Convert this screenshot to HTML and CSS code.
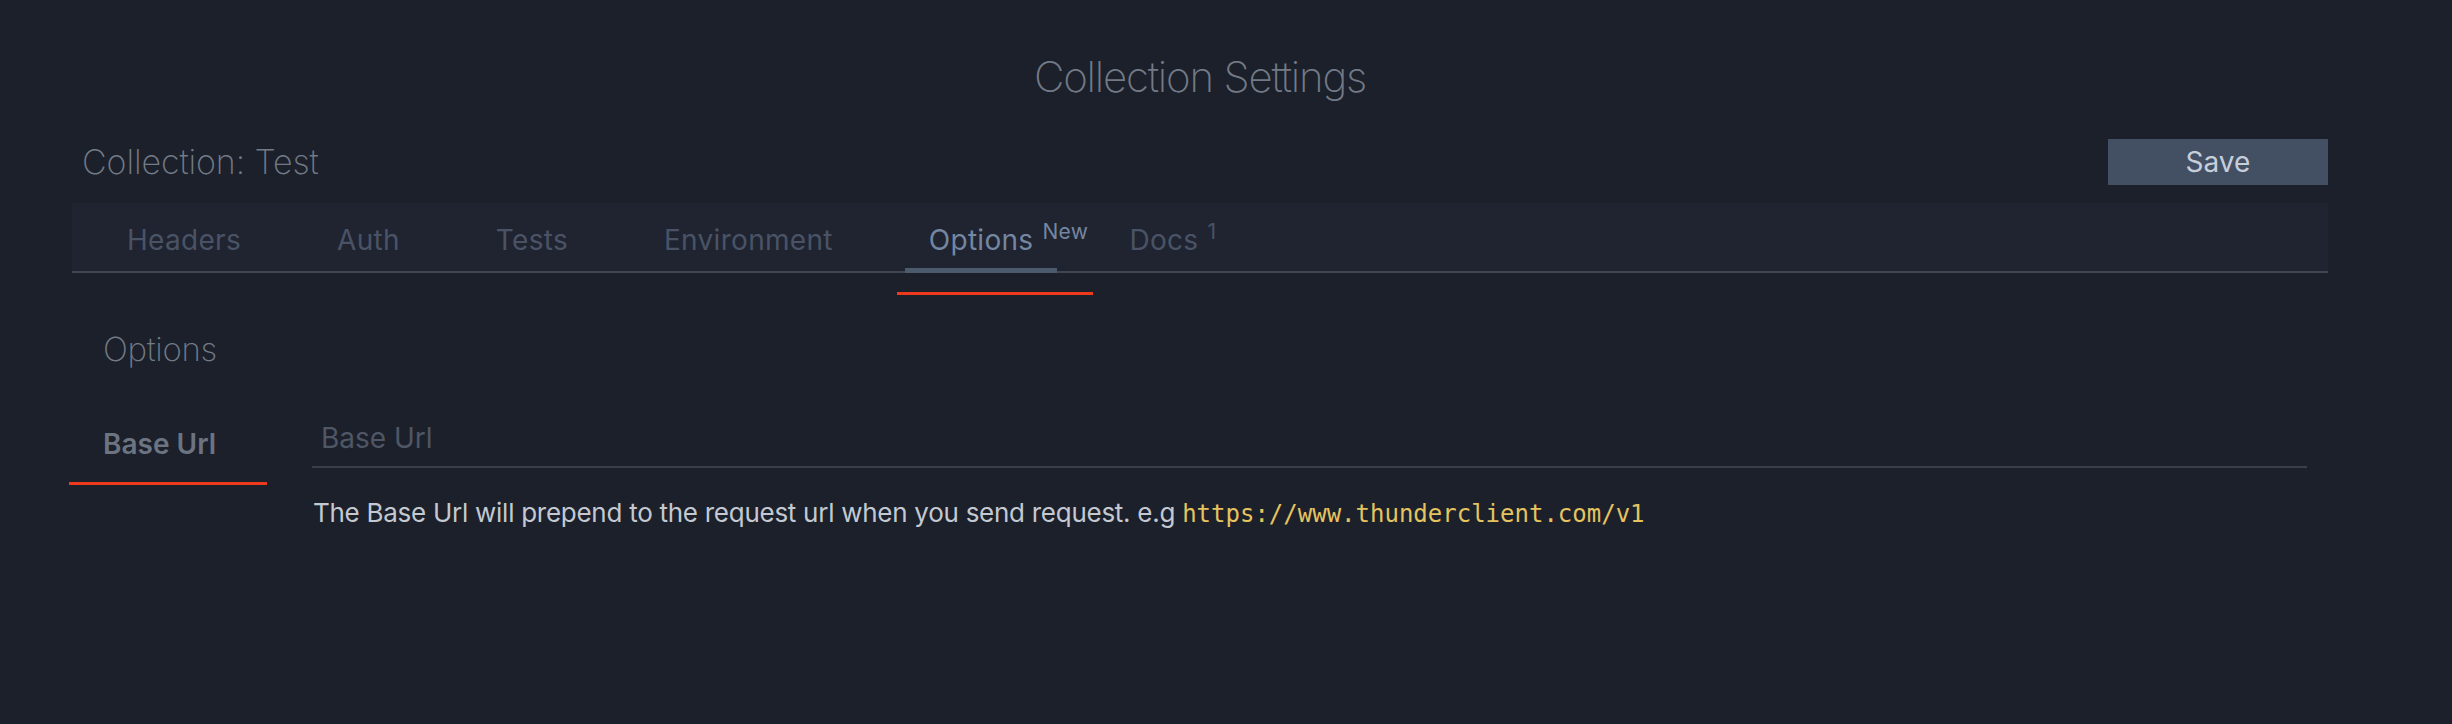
FILE: index.html
```html
<!DOCTYPE html>
<html lang="en">
<head>
  <meta charset="UTF-8">
  <meta name="viewport" content="width=device-width, initial-scale=1.0">
  <title>Collection Settings</title>
  <link rel="stylesheet" href="styles.css">
</head>
<body>
  <div class="page">
    <h1 class="page-title">Collection Settings</h1>

    <div class="header-row">
      <h2 class="collection-name">Collection: Test</h2>
      <button class="save-btn">Save</button>
    </div>

    <div class="tab-bar">
      <div class="tab">Headers</div>
      <div class="tab">Auth</div>
      <div class="tab">Tests</div>
      <div class="tab">Environment</div>
      <div class="tab active"><span class="tab-label">Options<sup class="tab-sup">New</sup></span></div>
      <div class="tab"><span class="tab-label">Docs<sup class="tab-sup">1</sup></span></div>
    </div>

    <h3 class="section-title">Options</h3>

    <div class="option-row">
      <div class="option-label">Base Url</div>
      <div class="option-field">
        <input class="text-input" type="text" placeholder="Base Url">
        <p class="option-help">The Base Url will prepend to the request url when you send request. e.g <code>https://www.thunderclient.com/v1</code></p>
      </div>
    </div>
  </div>
</body>
</html>
```

FILE: styles.css
```css
body {
  margin: 0;
  background-color: #1b202b;
  font-family: Inter, "Noto Sans", sans-serif;
  color: #6f7682;
}

.page {
  margin-left: 72px;
  width: 2256px;
  padding-top: 50px;
}

.page-title {
  margin: 0;
  text-align: center;
  font-size: 42px;
  line-height: 53px;
  font-weight: 200;
  letter-spacing: -1.2px;
  color: #737a86;
}

.header-row {
  display: flex;
  align-items: center;
  justify-content: space-between;
  margin-top: 36px;
  height: 46px;
}

.collection-name {
  margin: 0 0 0 10px;
  font-size: 34px;
  line-height: 46px;
  font-weight: 200;
  letter-spacing: -0.1px;
  color: #737a86;
}

.save-btn {
  width: 220px;
  height: 46px;
  border: none;
  background-color: #435064;
  color: #c6ced9;
  font-family: Inter, "Noto Sans", sans-serif;
  font-size: 28px;
  cursor: pointer;
}

.tab-bar {
  display: flex;
  margin-top: 18px;
  height: 68px;
  padding-left: 7px;
  background-color: #1f2430;
  border-bottom: 2px solid #41454f;
}

.tab {
  position: relative;
  margin: 0 24px;
  padding: 6px 24px 0;
  line-height: 62px;
  font-size: 28px;
  letter-spacing: 0.3px;
  color: #4a5366;
  white-space: nowrap;
}

.tab.active {
  color: #7486a0;
}

.tab.active::after {
  content: "";
  position: absolute;
  left: 0;
  right: 0;
  bottom: -2px;
  height: 5px;
  background-color: #4c5a6e;
}

.tab.active::before {
  content: "";
  position: absolute;
  left: -8px;
  width: 196px;
  top: 89px;
  height: 3px;
  background-color: #ee3a1c;
}

.tab-label {
  position: relative;
}

.tab-sup {
  position: absolute;
  left: 100%;
  top: -4px;
  margin-left: 9px;
  font-size: 21px;
  line-height: normal;
}

.section-title {
  margin: 56px 0 0 31px;
  font-size: 33px;
  line-height: 41px;
  font-weight: 200;
  letter-spacing: -0.3px;
  color: #737a86;
}

.option-row {
  display: grid;
  grid-template-columns: 198px 1fr;
  column-gap: 45px;
  align-items: start;
  margin: 51px 21px 0 -3px;
}

.option-label {
  margin-top: 6px;
  padding: 0 0 21px 34px;
  font-size: 28px;
  line-height: 34px;
  font-weight: 600;
  color: #6c7482;
  border-bottom: 3px solid #ee3a1c;
}

.text-input {
  display: block;
  box-sizing: border-box;
  width: 100%;
  margin: 0;
  padding: 0 0 11px 9px;
  border: none;
  border-bottom: 2px solid #3a3f4a;
  background: transparent;
  font-family: Inter, "Noto Sans", sans-serif;
  font-size: 28px;
  line-height: 34px;
  color: #c3c8d1;
  outline: none;
}

.text-input::placeholder {
  color: #4f5665;
}

.option-help {
  margin: 29px 0 0 1px;
  font-size: 26px;
  line-height: 32px;
  letter-spacing: -0.27px;
  color: #c3c8d1;
}

.option-help code {
  font-family: "DejaVu Sans Mono", monospace;
  font-size: 24px;
  letter-spacing: 0;
  color: #e5c35f;
}
```
